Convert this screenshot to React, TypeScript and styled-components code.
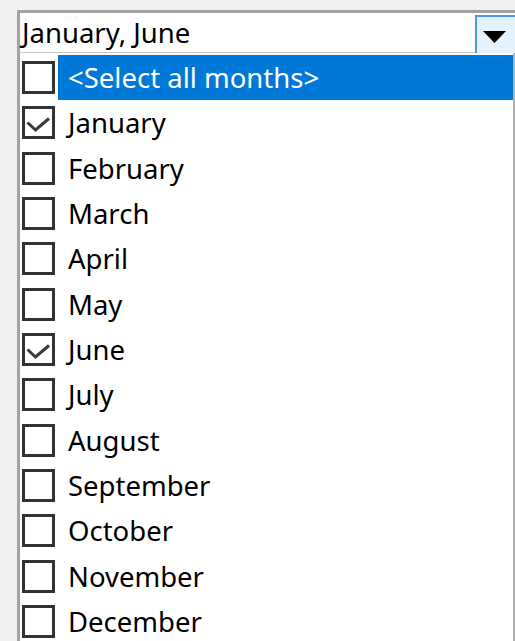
import React from "react";
import styled, { createGlobalStyle } from "styled-components";

const Global = createGlobalStyle`
  html, body { margin: 0; padding: 0; background: #f0f0f0; }
  body { font-family: "Noto Sans", "Open Sans", sans-serif; }
`;

const Page = styled.div`
  width: 515px;
  height: 641px;
  overflow: hidden;
  box-sizing: border-box;
  padding: 10px 0 0 17px;
`;

const Combo = styled.div`
  display: flex;
  width: 498px;
  height: 43px;
  box-sizing: border-box;
  background: #ffffff;
  border-top: 3px solid #a2a2a2;
  border-left: 3px solid #a2a2a2;
  border-bottom: 1px solid #c4c4c4;
`;

const Value = styled.div`
  flex: 1;
  padding-left: 2px;
  font-size: 27.5px;
  line-height: 39px;
  color: #000;
  white-space: nowrap;
`;

const DropButton = styled.div`
  width: 40px;
  height: 38px;
  margin-top: 2px;
  box-sizing: border-box;
  border: 2px solid #4c98e4;
  border-right: none;
  border-bottom: none;
  background: #e5f1fb;
  display: flex;
  align-items: center;
  padding-left: 6px;
  padding-top: 4px;
`;

const List = styled.div`
  width: 498px;
  box-sizing: border-box;
  background: #ffffff;
  border-left: 3px solid #a2a2a2;
  border-right: 2px solid #b0b0b0;
  padding-top: 2px;
`;

const Row = styled.div`
  display: flex;
  align-items: center;
  height: 45.33px;
`;

const Box = styled.span`
  width: 33px;
  height: 33px;
  box-sizing: border-box;
  border: 3px solid #333333;
  margin-left: 2px;
  flex: none;
  display: flex;
`;

const Label = styled.div<{ $selected?: boolean }>`
  align-self: stretch;
  flex: 1;
  margin-left: 3px;
  padding-left: 10px;
  font-size: 27.5px;
  line-height: 45.33px;
  white-space: nowrap;
  color: ${(p) => (p.$selected ? "#ffffff" : "#000000")};
  background: ${(p) => (p.$selected ? "#0078d7" : "transparent")};
`;

const Check = () => (
  <svg width="27" height="27" viewBox="0 0 27 27">
    <polyline
      points="2.5,13.5 10.5,21 24,9.5"
      fill="none"
      stroke="#3a3a3a"
      strokeWidth="3"
    />
  </svg>
);

const Arrow = () => (
  <svg width="23" height="13" viewBox="0 0 23 13">
    <polygon points="0,0 23,0 11.5,12" fill="#000" />
  </svg>
);

const months = [
  "January",
  "February",
  "March",
  "April",
  "May",
  "June",
  "July",
  "August",
  "September",
  "October",
  "November",
  "December",
];
const checked = new Set(["January", "June"]);

export default function App() {
  return (
    <>
      <Global />
      <Page>
        <Combo>
          <Value>January, June</Value>
          <DropButton>
            <Arrow />
          </DropButton>
        </Combo>
        <List>
          <Row>
            <Box />
            <Label $selected>&lt;Select all months&gt;</Label>
          </Row>
          {months.map((m) => (
            <Row key={m}>
              <Box>{checked.has(m) && <Check />}</Box>
              <Label>{m}</Label>
            </Row>
          ))}
        </List>
      </Page>
    </>
  );
}
